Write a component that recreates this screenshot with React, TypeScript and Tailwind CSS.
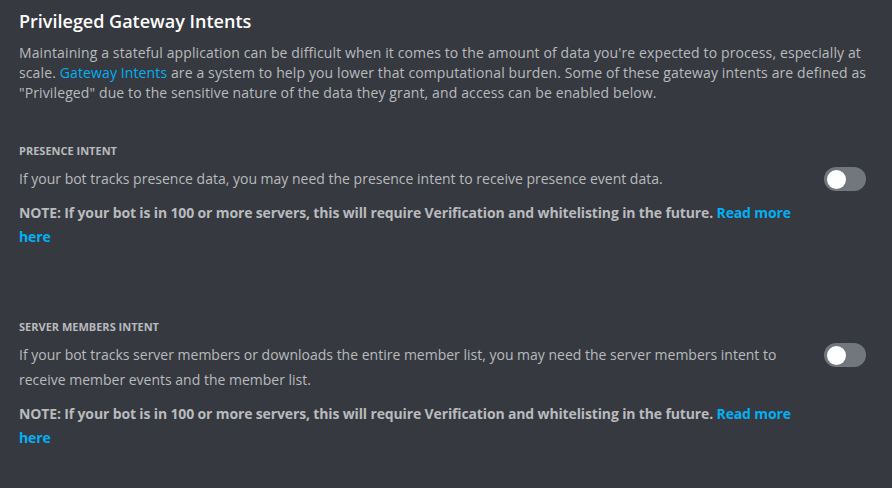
const font = { fontFamily: '"Open Sans", "Noto Sans", sans-serif' };

function Toggle() {
  return (
    <div className="flex h-6 w-[42px] shrink-0 items-center rounded-full bg-[#72767d] px-[3px]">
      <div className="h-[19px] w-[19px] rounded-full bg-white" />
    </div>
  );
}

function Intent({ label, text }: { label: string; text: string }) {
  return (
    <div className="flex flex-col">
      <div className="text-[11px] font-bold uppercase leading-4 text-[#b9bbbe]">{label}</div>
      <div className="mt-[7px] flex items-start">
        <div className="flex w-[790px] shrink-0 flex-col">
          <p className="text-[14px] leading-[25px] text-[#b9bbbe]">{text}</p>
          <p className="mt-[10px] text-[14px] font-bold leading-[24px] tracking-[-0.14px] text-[#b9bbbe]">
            NOTE: If your bot is in 100 or more servers, this will require Verification and whitelisting in the future.{" "}
            <a className="text-[#00b0f4]">Read more here</a>
          </p>
        </div>
        <div className="ml-[15px] mt-[1px]">
          <Toggle />
        </div>
      </div>
    </div>
  );
}

export default function App() {
  return (
    <div className="min-h-screen w-full bg-[#36393f] px-[19px] pt-[9px]" style={font}>
      <h1 className="text-[18px] font-semibold leading-6 text-white">Privileged Gateway Intents</h1>
      <p className="mt-[10px] w-[852px] text-[14px] leading-[20px] tracking-[0.12px] text-[#b9bbbe]">
        Maintaining a stateful application can be difficult when it comes to the amount of data you're expected to process, especially at scale.{" "}
        <a className="text-[#00b0f4]">Gateway Intents</a> are a system to help you lower that computational burden. Some of these gateway intents are defined as "Privileged" due to the sensitive nature of the data they grant, and access can be enabled below.
      </p>
      <div className="mt-[40px] flex flex-col gap-[70px]">
        <Intent label="Presence Intent" text="If your bot tracks presence data, you may need the presence intent to receive presence event data." />
        <Intent label="Server Members Intent" text="If your bot tracks server members or downloads the entire member list, you may need the server members intent to receive member events and the member list." />
      </div>
    </div>
  );
}
